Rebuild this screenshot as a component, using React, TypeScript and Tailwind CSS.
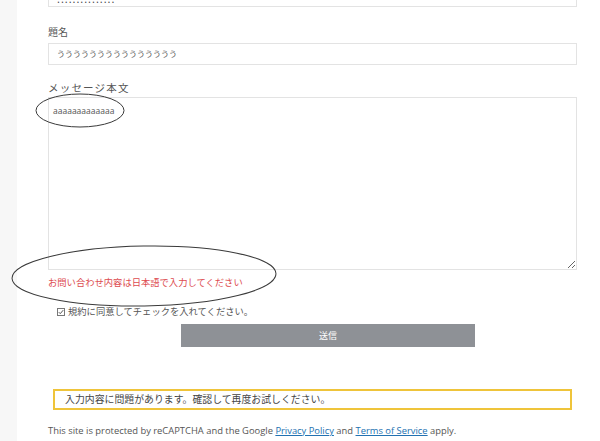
import React from 'react';

const font = { fontFamily: '"Open Sans", "Noto Sans CJK JP", sans-serif' };

export default function App() {
  return (
    <div className="relative w-[600px] h-[441px] overflow-hidden bg-white flex" style={font}>
      {/* left page gutter */}
      <div className="w-[17px] shrink-0 bg-[#f7f7f7]" />

      <div className="flex-1 flex flex-col pl-[31px] pr-[23px] text-[#555]">
        {/* previous field, scrolled mostly out of view */}
        <div className="mt-[-15px] h-[22px] border border-[#e3e3e3] px-[8px] pb-[3px] flex items-end text-[11px] leading-[8px] tracking-[1px] text-[#444]">
          ...............
        </div>

        <label className="mt-[19px] text-[10px] leading-[12px]">題名</label>
        <div className="mt-[5px] h-[22px] border border-[#e3e3e3] px-[8px] flex items-center text-[8px] text-[#555]">
          ううううううううううううううう
        </div>

        <label className="mt-[17px] text-[10.5px] leading-[12px] tracking-[1.2px]">メッセージ本文</label>
        <textarea
          readOnly
          value="aaaaaaaaaaaaa"
          className="mt-[3px] h-[173px] border border-[#e3e3e3] px-[4px] py-[7px] text-[8.5px] leading-[12px] text-[#555] outline-none"
        />

        <div className="mt-[7px] text-[9.3px] leading-[12px] text-[#dd4b4f]">お問い合わせ内容は日本語で入力してください</div>

        <div className="mt-[17px] ml-[9px] flex items-center gap-[3px] text-[9.3px] leading-[12px] text-[#555]">
          <span className="w-[8px] h-[8px] border border-[#777] flex items-center justify-center">
            <svg viewBox="0 0 8 8" className="w-[6px] h-[6px]" fill="none" stroke="#444" strokeWidth="1.2">
              <path d="M1 4.2 L3 6.2 L7 1.5" />
            </svg>
          </span>
          規約に同意してチェックを入れてください。
        </div>

        <div className="mt-[6px] ml-[133px] w-[294px] h-[23px] bg-[#8e9196] text-white text-[9px] flex items-center justify-center">
          送信
        </div>

        <div className="mt-[42px] ml-[5px] w-[519px] h-[21px] border-2 border-[#efc43a] pl-[10px] flex items-center text-[9.9px] text-[#444]">
          入力内容に問題があります。確認して再度お試しください。
        </div>

        <div className="mt-[15px] text-[9.4px] leading-[12px] text-[#555] whitespace-nowrap">
          This site is protected by reCAPTCHA and the Google{' '}
          <a className="underline text-[#2271b1]">Privacy Policy</a> and{' '}
          <a className="underline text-[#2271b1]">Terms of Service</a> apply.
        </div>
      </div>

      {/* hand-drawn annotation circles */}
      <svg className="absolute inset-0 pointer-events-none" width="600" height="441" fill="none" stroke="#3a3a3a" strokeWidth="1">
        <ellipse cx="80" cy="110.5" rx="44" ry="16.5" />
        <ellipse cx="144" cy="276" rx="132" ry="30" transform="rotate(-1 144 276)" />
      </svg>
    </div>
  );
}
